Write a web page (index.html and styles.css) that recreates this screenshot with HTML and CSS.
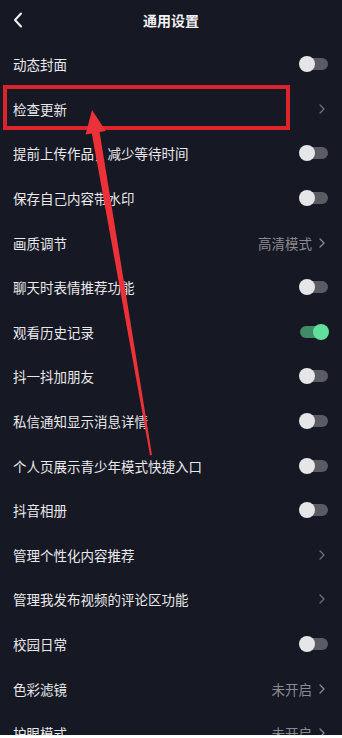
FILE: index.html
```html
<!DOCTYPE html>
<html lang="zh-CN">
<head>
<meta charset="utf-8">
<title>通用设置</title>
<link rel="stylesheet" href="styles.css">
</head>
<body>
<div class="app">
  <header class="header">
    <svg class="back" width="12" height="16" viewBox="0 0 12 16"><path d="M9 1.5 L3 8 L9 14.5" fill="none" stroke="#f2f2f4" stroke-width="2" stroke-linecap="round" stroke-linejoin="round"/></svg>
    <div class="title">通用设置</div>
  </header>
  <div class="list">
    <div class="row"><span class="label">动态封面</span><span class="toggle"><span class="knob"></span></span></div>
    <div class="row"><span class="label">检查更新</span><span class="right"><svg class="chev" width="6" height="10" viewBox="0 0 6 10"><path d="M1 1 L5 5 L1 9" fill="none" stroke="#6f7077" stroke-width="1.3" stroke-linecap="round" stroke-linejoin="round"/></svg></span></div>
    <div class="row"><span class="label">提前上传作品，减少等待时间</span><span class="toggle"><span class="knob"></span></span></div>
    <div class="row"><span class="label">保存自己内容带水印</span><span class="toggle"><span class="knob"></span></span></div>
    <div class="row"><span class="label">画质调节</span><span class="right"><span class="value">高清模式</span><svg class="chev" width="6" height="10" viewBox="0 0 6 10"><path d="M1 1 L5 5 L1 9" fill="none" stroke="#8a8b91" stroke-width="1.3" stroke-linecap="round" stroke-linejoin="round"/></svg></span></div>
    <div class="row"><span class="label">聊天时表情推荐功能</span><span class="toggle"><span class="knob"></span></span></div>
    <div class="row"><span class="label">观看历史记录</span><span class="toggle on"><span class="knob"></span></span></div>
    <div class="row"><span class="label">抖一抖加朋友</span><span class="toggle"><span class="knob"></span></span></div>
    <div class="row"><span class="label">私信通知显示消息详情</span><span class="toggle"><span class="knob"></span></span></div>
    <div class="row"><span class="label">个人页展示青少年模式快捷入口</span><span class="toggle"><span class="knob"></span></span></div>
    <div class="row"><span class="label">抖音相册</span><span class="toggle"><span class="knob"></span></span></div>
    <div class="row"><span class="label">管理个性化内容推荐</span><span class="right"><svg class="chev" width="6" height="10" viewBox="0 0 6 10"><path d="M1 1 L5 5 L1 9" fill="none" stroke="#6f7077" stroke-width="1.3" stroke-linecap="round" stroke-linejoin="round"/></svg></span></div>
    <div class="row"><span class="label">管理我发布视频的评论区功能</span><span class="right"><svg class="chev" width="6" height="10" viewBox="0 0 6 10"><path d="M1 1 L5 5 L1 9" fill="none" stroke="#6f7077" stroke-width="1.3" stroke-linecap="round" stroke-linejoin="round"/></svg></span></div>
    <div class="row"><span class="label">校园日常</span><span class="toggle"><span class="knob"></span></span></div>
    <div class="row"><span class="label">色彩滤镜</span><span class="right"><span class="value">未开启</span><svg class="chev" width="6" height="10" viewBox="0 0 6 10"><path d="M1 1 L5 5 L1 9" fill="none" stroke="#8a8b91" stroke-width="1.3" stroke-linecap="round" stroke-linejoin="round"/></svg></span></div>
    <div class="row"><span class="label">护眼模式</span><span class="right"><span class="value">未开启</span><svg class="chev" width="6" height="10" viewBox="0 0 6 10"><path d="M1 1 L5 5 L1 9" fill="none" stroke="#8a8b91" stroke-width="1.3" stroke-linecap="round" stroke-linejoin="round"/></svg></span></div>
  </div>
  <svg class="annot" width="342" height="735" viewBox="0 0 342 735">
    <rect x="5" y="87" width="283" height="41" fill="none" stroke="#dc242c" stroke-width="4"/>
    <polygon points="92,110 105.8,131 99.6,132 152,455 150,455.2 91.8,133.4 85.6,134.4" fill="#ec3238"/>
  </svg>
</div>
</body>
</html>
```
FILE: styles.css
```css
* { box-sizing: border-box; }
html, body { margin: 0; padding: 0; background: #ffffff; }
body {
  width: 342px;
  height: 738px;
  overflow: hidden;
  font-family: "Noto Sans CJK SC", "Noto Sans", sans-serif;
}
.app {
  position: relative;
  width: 342px;
  height: 735px;
  overflow: hidden;
  background: #161823;
}
.header {
  position: relative;
  height: 42px;
  display: flex;
  align-items: center;
  justify-content: center;
}
.back {
  position: absolute;
  left: 12px;
  top: 12px;
}
.title {
  color: #f2f2f4;
  font-size: 14px;
  font-weight: 700;
  letter-spacing: 0;
  margin-top: -2px;
}
.list {
  display: flex;
  flex-direction: column;
}
.row {
  height: 44.6px;
  display: flex;
  align-items: center;
  justify-content: space-between;
  padding: 0 14px 0 13px;
  flex-shrink: 0;
}
.label {
  color: #e9e9ec;
  font-size: 13.5px;
  line-height: 20px;
}
.right {
  display: flex;
  align-items: center;
  gap: 7px;
  padding-right: 3px;
}
.value {
  color: #8a8b91;
  font-size: 13.5px;
  line-height: 20px;
}
.chev { display: block; }
.toggle {
  width: 28px;
  height: 12px;
  border-radius: 6px;
  background: #5a5b63;
  display: flex;
  align-items: center;
  justify-content: flex-start;
}
.knob {
  width: 16px;
  height: 16px;
  border-radius: 50%;
  background: #e6e6e9;
  flex-shrink: 0;
  margin-left: -1px;
}
.toggle.on {
  background: #3f8c66;
  justify-content: flex-end;
}
.toggle.on .knob {
  background: #5fe09b;
  margin-left: 0;
  margin-right: -1px;
}
.annot {
  position: absolute;
  left: 0;
  top: 0;
  pointer-events: none;
}
```
